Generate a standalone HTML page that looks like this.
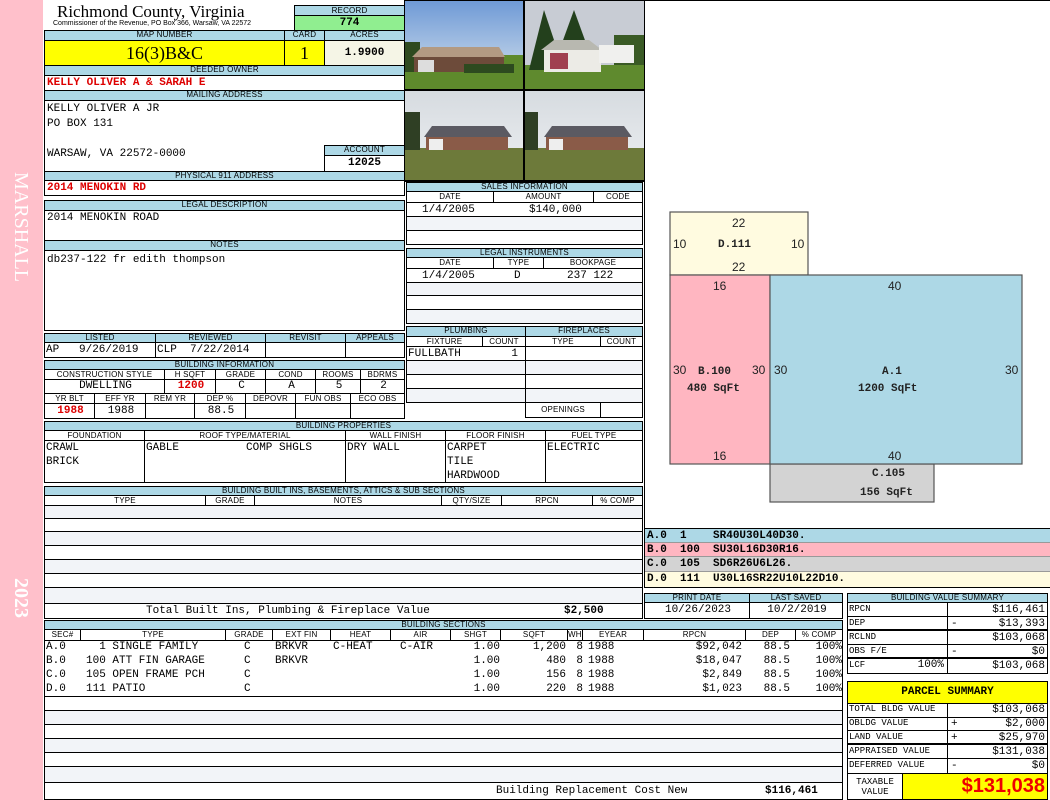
<!DOCTYPE html>
<html><head><meta charset="utf-8"><style>
*{margin:0;padding:0;box-sizing:border-box}
body{width:1050px;height:800px;background:#fff;position:relative;overflow:hidden;font-family:"Liberation Mono",monospace;font-size:11px;color:#000}
div,span{position:absolute;white-space:nowrap;overflow:hidden}
.b{border:1px solid #000}
.h{background:#add8e6;border:1px solid #000;font:8px/8px "Liberation Sans",sans-serif;text-align:center;text-transform:uppercase;letter-spacing:.2px}
.s{background:#fff;border:1px solid #000;font:8px/9px "Liberation Sans",sans-serif;text-align:center;letter-spacing:.2px}
.v{font:11px/14px "Liberation Mono",monospace;padding-left:2px}
.r{text-align:right;padding-right:3px}
.c{text-align:center}
.red{color:#d00;font-weight:bold}
.ln{border-bottom:1px solid #000}
.st{background:#f2f4f8}
.bv{font:9px/13px "Liberation Mono",monospace;padding-left:1px}
.row{height:14px;font:11px/14px "Liberation Mono",monospace}
.row span{top:0}
</style></head><body>
<div style="left:0;top:0;width:43px;height:800px;background:#ffc0cb"></div>
<div style="left:8px;top:172px;width:30px;height:140px;"><div style="left:0;top:0;width:140px;height:30px;transform-origin:0 0;transform:translate(28px,0) rotate(90deg);font:20px/30px 'Liberation Serif',serif;color:#fff">MARSHALL</div></div>
<div style="left:8px;top:578px;width:30px;height:60px;"><div style="left:0;top:0;width:60px;height:30px;transform-origin:0 0;transform:translate(28px,0) rotate(90deg);font:bold 20px/30px 'Liberation Serif',serif;color:#fff">2023</div></div>

<div style="left:57px;top:2px;width:240px;height:20px;font:17px/20px 'Liberation Serif',serif">Richmond County, Virginia</div>
<div style="left:53px;top:19px;width:240px;height:10px;font:7px/10px 'Liberation Sans',sans-serif">Commissioner of the Revenue, PO Box 366, Warsaw, VA 22572</div>
<div class="h" style="left:294px;top:5px;width:111px;height:11px;line-height:9px">RECORD</div>
<div class="b" style="left:294px;top:15px;width:111px;height:16px;background:#90ee90;font:bold 11px/14px 'Liberation Mono',monospace;text-align:center">774</div>
<div class="h" style="left:44px;top:30px;width:241px;height:11px">Map Number</div>
<div class="h" style="left:284px;top:30px;width:41px;height:11px">Card</div>
<div class="h" style="left:324px;top:30px;width:81px;height:11px">Acres</div>
<div class="b" style="left:44px;top:40px;width:241px;height:26px;background:#ffff00;font:18px/24px 'Liberation Serif',serif;text-align:center">16(3)B&amp;C</div>
<div class="b" style="left:284px;top:40px;width:41px;height:26px;background:#ffff00;font:18px/24px 'Liberation Serif',serif;text-align:center">1</div>
<div class="b" style="left:324px;top:40px;width:81px;height:26px;background:#f5f5e6;font:bold 11px/24px 'Liberation Mono',monospace;text-align:center">1.9900</div>
<div class="h" style="left:44px;top:65px;width:361px;height:11px">Deeded Owner</div>
<div class="b v red" style="left:44px;top:75px;width:361px;height:16px;line-height:14px">KELLY OLIVER A &amp; SARAH E</div>
<div class="h" style="left:44px;top:90px;width:361px;height:11px">Mailing Address</div>
<div class="b" style="left:44px;top:100px;width:361px;height:72px"></div>
<div class="v" style="left:45px;top:102px;width:270px;height:60px;line-height:15px;white-space:pre">KELLY OLIVER A JR
PO BOX 131

WARSAW, VA 22572-0000</div>
<div class="h" style="left:324px;top:145px;width:81px;height:11px">Account</div>
<div class="b" style="left:324px;top:155px;width:81px;height:17px;font:bold 11px/15px 'Liberation Mono',monospace;text-align:center">12025</div>
<div class="h" style="left:44px;top:171px;width:361px;height:10px;line-height:8px">Physical 911 Address</div>
<div class="b v red" style="left:44px;top:180px;width:361px;height:16px;line-height:14px">2014 MENOKIN RD</div>
<div class="h" style="left:44px;top:200px;width:361px;height:11px">Legal Description</div>
<div class="b v" style="left:44px;top:210px;width:361px;height:31px">2014 MENOKIN ROAD</div>
<div class="h" style="left:44px;top:240px;width:361px;height:11px">Notes</div>
<div class="b v" style="left:44px;top:250px;width:361px;height:81px;line-height:18px">db237-122 fr edith thompson</div>

<div class="h" style="left:44px;top:333px;width:112px;height:10px">Listed</div>
<div class="h" style="left:155px;top:333px;width:111px;height:10px">Reviewed</div>
<div class="h" style="left:265px;top:333px;width:81px;height:10px">Revisit</div>
<div class="h" style="left:345px;top:333px;width:60px;height:10px">Appeals</div>
<div class="b v" style="left:44px;top:342px;width:112px;height:16px;padding-left:1px">AP &nbsp;&nbsp;9/26/2019</div>
<div class="b v" style="left:155px;top:342px;width:111px;height:16px;padding-left:1px">CLP &nbsp;7/22/2014</div>
<div class="b" style="left:265px;top:342px;width:81px;height:16px"></div>
<div class="b" style="left:345px;top:342px;width:60px;height:16px"></div>
<div class="h" style="left:44px;top:360px;width:361px;height:10px">Building Information</div>
<div class="s" style="left:44px;top:369px;width:121px;height:11px">CONSTRUCTION STYLE</div>
<div class="s" style="left:164px;top:369px;width:52px;height:11px">H SQFT</div>
<div class="s" style="left:215px;top:369px;width:51px;height:11px">GRADE</div>
<div class="s" style="left:265px;top:369px;width:51px;height:11px">COND</div>
<div class="s" style="left:315px;top:369px;width:46px;height:11px">ROOMS</div>
<div class="s" style="left:360px;top:369px;width:45px;height:11px">BDRMS</div>
<div class="b v c" style="left:44px;top:379px;width:121px;height:15px;line-height:13px">DWELLING</div>
<div class="b v c red" style="left:164px;top:379px;width:52px;height:15px;line-height:13px">1200</div>
<div class="b v c" style="left:215px;top:379px;width:51px;height:15px;line-height:13px">C</div>
<div class="b v c" style="left:265px;top:379px;width:51px;height:15px;line-height:13px">A</div>
<div class="b v c" style="left:315px;top:379px;width:46px;height:15px;line-height:13px">5</div>
<div class="b v c" style="left:360px;top:379px;width:45px;height:15px;line-height:13px">2</div>
<div class="s" style="left:44px;top:393px;width:51px;height:11px">YR BLT</div>
<div class="s" style="left:94px;top:393px;width:52px;height:11px">EFF YR</div>
<div class="s" style="left:145px;top:393px;width:50px;height:11px">REM YR</div>
<div class="s" style="left:194px;top:393px;width:52px;height:11px">DEP %</div>
<div class="s" style="left:245px;top:393px;width:51px;height:11px">DEPOVR</div>
<div class="s" style="left:295px;top:393px;width:56px;height:11px">FUN OBS</div>
<div class="s" style="left:350px;top:393px;width:55px;height:11px">ECO OBS</div>
<div class="b v c red" style="left:44px;top:403px;width:51px;height:16px">1988</div>
<div class="b v c" style="left:94px;top:403px;width:52px;height:16px">1988</div>
<div class="b" style="left:145px;top:403px;width:50px;height:16px"></div>
<div class="b v c" style="left:194px;top:403px;width:52px;height:16px">88.5</div>
<div class="b" style="left:245px;top:403px;width:51px;height:16px"></div>
<div class="b" style="left:295px;top:403px;width:56px;height:16px"></div>
<div class="b" style="left:350px;top:403px;width:55px;height:16px"></div>

<div style="left:404px;top:0;width:241px;height:182px;background:#000">
<svg width="241" height="182" viewBox="0 0 241 182" style="position:absolute;left:0;top:0">
<defs><linearGradient id="sk" x1="0" y1="0" x2="0" y2="1"><stop offset="0" stop-color="#6f9ad6"/><stop offset="1" stop-color="#d8e4ee"/></linearGradient>
<linearGradient id="sk2" x1="0" y1="0" x2="0" y2="1"><stop offset="0" stop-color="#d6dbe0"/><stop offset="1" stop-color="#eef0f2"/></linearGradient></defs>
<rect x="1" y="1" width="118" height="88" fill="url(#sk)"/>
<rect x="1" y="55" width="118" height="34" fill="#5e8a2c"/>
<rect x="1" y="42" width="15" height="30" fill="#2f4a1f"/>
<polygon points="8,57 18,47 95,47 101,57" fill="#b39a82"/>
<rect x="10" y="57" width="90" height="15" fill="#6d4b3a"/>
<rect x="14" y="60" width="16" height="12" fill="#ddd"/>
<rect x="60" y="64" width="50" height="9" fill="#2d4a1f"/>
<rect x="121" y="1" width="119" height="88" fill="#c8ccd4"/>
<rect x="121" y="65" width="119" height="24" fill="#5f8a2e"/>
<polygon points="125,70 140,10 160,70" fill="#23401c"/>
<polygon points="150,65 170,10 190,65" fill="#23401c"/>
<rect x="210" y="35" width="30" height="30" fill="#3a5a25"/>
<rect x="140" y="48" width="57" height="24" fill="#ecebe6"/>
<polygon points="137,50 150,40 185,40 198,50" fill="#b8b8b0"/>
<rect x="146" y="53" width="18" height="16" fill="#a04050"/>
<rect x="195" y="45" width="35" height="18" fill="#f0f0ee"/>
<rect x="1" y="91" width="118" height="89" fill="url(#sk2)"/>
<rect x="1" y="148" width="118" height="32" fill="#6d7a3a"/>
<rect x="1" y="112" width="15" height="38" fill="#2f3f24"/>
<polygon points="20,137 28,126 100,126 108,137" fill="#5b5a62"/>
<rect x="22" y="137" width="82" height="13" fill="#8a5b48"/>
<rect x="25" y="139" width="14" height="11" fill="#eee"/>
<rect x="121" y="91" width="119" height="89" fill="url(#sk2)"/>
<rect x="121" y="148" width="119" height="32" fill="#6d7a3a"/>
<rect x="121" y="112" width="13" height="38" fill="#2f3f24"/>
<polygon points="140,137 148,126 220,126 228,137" fill="#5b5a62"/>
<rect x="142" y="137" width="82" height="13" fill="#8a5b48"/>
<rect x="145" y="139" width="14" height="11" fill="#eee"/>
</svg></div>

<!-- sales -->
<div class="st ln" style="left:406px;top:216px;width:237px;height:15px"></div>
<div class="b" style="left:406px;top:182px;width:237px;height:63px"></div>
<div class="ln" style="left:406px;top:202px;width:237px;height:15px"></div>
<div class="h" style="left:406px;top:182px;width:237px;height:10px">Sales Information</div>
<div class="s" style="left:406px;top:191px;width:88px;height:12px">DATE</div>
<div class="s" style="left:493px;top:191px;width:101px;height:12px">AMOUNT</div>
<div class="s" style="left:593px;top:191px;width:50px;height:12px">CODE</div>
<div class="v" style="left:420px;top:203px;width:80px;height:14px">1/4/2005</div>
<div class="v" style="left:527px;top:203px;width:80px;height:14px">$140,000</div>
<!-- legal instruments -->
<div class="st ln" style="left:406px;top:282px;width:237px;height:14px"></div>
<div class="st" style="left:406px;top:309px;width:237px;height:14px"></div>
<div class="b" style="left:406px;top:248px;width:237px;height:76px"></div>
<div class="ln" style="left:406px;top:268px;width:237px;height:15px"></div>
<div class="ln" style="left:406px;top:295px;width:237px;height:15px"></div>
<div class="h" style="left:406px;top:248px;width:237px;height:10px">Legal Instruments</div>
<div class="s" style="left:406px;top:257px;width:88px;height:12px">DATE</div>
<div class="s" style="left:493px;top:257px;width:51px;height:12px">TYPE</div>
<div class="s" style="left:543px;top:257px;width:100px;height:12px">BOOKPAGE</div>
<div class="v" style="left:420px;top:269px;width:80px;height:14px">1/4/2005</div>
<div class="v" style="left:512px;top:269px;width:20px;height:14px">D</div>
<div class="v" style="left:565px;top:269px;width:70px;height:14px">237 122</div>
<!-- plumbing -->
<div class="st" style="left:406px;top:360px;width:237px;height:15px"></div>
<div class="st" style="left:406px;top:388px;width:237px;height:15px"></div>
<div class="ln" style="left:406px;top:346px;width:237px;height:15px"></div>
<div class="ln" style="left:406px;top:360px;width:237px;height:15px"></div>
<div class="ln" style="left:406px;top:374px;width:237px;height:15px"></div>
<div class="ln" style="left:406px;top:388px;width:237px;height:15px"></div>
<div class="b" style="left:406px;top:346px;width:120px;height:57px"></div>
<div class="b" style="left:525px;top:346px;width:118px;height:72px"></div>
<div class="h" style="left:406px;top:326px;width:120px;height:11px">Plumbing</div>
<div class="h" style="left:525px;top:326px;width:118px;height:11px">Fireplaces</div>
<div class="s" style="left:406px;top:336px;width:77px;height:11px">FIXTURE</div>
<div class="s" style="left:482px;top:336px;width:44px;height:11px">COUNT</div>
<div class="s" style="left:525px;top:336px;width:76px;height:11px">TYPE</div>
<div class="s" style="left:600px;top:336px;width:43px;height:11px">COUNT</div>
<div class="v" style="left:407px;top:347px;width:116px;height:14px;padding-left:1px">FULLBATH<span style="right:5px;top:0">1</span></div>
<div class="s" style="left:525px;top:402px;width:76px;height:16px;line-height:14px">OPENINGS</div>
<div class="b" style="left:600px;top:402px;width:43px;height:16px"></div>

<!-- building properties -->
<div class="h" style="left:44px;top:421px;width:599px;height:10px">Building Properties</div>
<div class="s" style="left:44px;top:430px;width:101px;height:11px">FOUNDATION</div>
<div class="s" style="left:144px;top:430px;width:202px;height:11px">ROOF TYPE/MATERIAL</div>
<div class="s" style="left:345px;top:430px;width:101px;height:11px">WALL FINISH</div>
<div class="s" style="left:445px;top:430px;width:101px;height:11px">FLOOR FINISH</div>
<div class="s" style="left:545px;top:430px;width:98px;height:11px">FUEL TYPE</div>
<div class="b v" style="left:44px;top:440px;width:101px;height:43px;padding-left:1px">CRAWL<br>BRICK</div>
<div class="b v" style="left:144px;top:440px;width:202px;height:43px;padding-left:1px">GABLE<span style="left:101px;top:0">COMP SHGLS</span></div>
<div class="b v" style="left:345px;top:440px;width:101px;height:43px;padding-left:1px">DRY WALL</div>
<div class="b v" style="left:445px;top:440px;width:101px;height:43px;padding-left:1px">CARPET<br>TILE<br>HARDWOOD</div>
<div class="b v" style="left:545px;top:440px;width:98px;height:43px;padding-left:1px">ELECTRIC</div>

<!-- built ins -->
<div class="h" style="left:44px;top:486px;width:599px;height:10px">Building Built Ins, Basements, Attics &amp; Sub Sections</div>
<div class="s" style="left:44px;top:495px;width:162px;height:11px">TYPE</div>
<div class="s" style="left:205px;top:495px;width:50px;height:11px">GRADE</div>
<div class="s" style="left:254px;top:495px;width:188px;height:11px">NOTES</div>
<div class="s" style="left:441px;top:495px;width:61px;height:11px">QTY/SIZE</div>
<div class="s" style="left:501px;top:495px;width:92px;height:11px">RPCN</div>
<div class="s" style="left:592px;top:495px;width:51px;height:11px">% COMP</div>
<div class="st" style="left:44px;top:505px;width:599px;height:14px"></div>
<div class="st" style="left:44px;top:531px;width:599px;height:15px"></div>
<div class="st" style="left:44px;top:559px;width:599px;height:15px"></div>
<div class="st" style="left:44px;top:587px;width:599px;height:16px"></div>
<div class="ln" style="left:44px;top:505px;width:599px;height:14px"></div>
<div class="ln" style="left:44px;top:518px;width:599px;height:14px"></div>
<div class="ln" style="left:44px;top:531px;width:599px;height:15px"></div>
<div class="ln" style="left:44px;top:545px;width:599px;height:15px"></div>
<div class="ln" style="left:44px;top:559px;width:599px;height:15px"></div>
<div class="ln" style="left:44px;top:573px;width:599px;height:15px"></div>
<div class="b" style="left:44px;top:505px;width:599px;height:99px"></div>
<div class="b v" style="left:44px;top:603px;width:599px;height:16px;line-height:15px"><span style="left:101px;top:0">Total Built Ins, Plumbing &amp; Fireplace Value</span><span style="left:519px;top:0;font-weight:bold">$2,500</span></div>

<!-- building sections -->
<div class="h" style="left:44px;top:620px;width:799px;height:10px">Building Sections</div>
<div class="s" style="left:44px;top:629px;width:37px;height:12px">SEC#</div>
<div class="s" style="left:80px;top:629px;width:146px;height:12px">TYPE</div>
<div class="s" style="left:225px;top:629px;width:48px;height:12px">GRADE</div>
<div class="s" style="left:272px;top:629px;width:59px;height:12px">EXT FIN</div>
<div class="s" style="left:330px;top:629px;width:61px;height:12px">HEAT</div>
<div class="s" style="left:390px;top:629px;width:61px;height:12px">AIR</div>
<div class="s" style="left:450px;top:629px;width:51px;height:12px">SHGT</div>
<div class="s" style="left:500px;top:629px;width:68px;height:12px">SQFT</div>
<div class="s" style="left:567px;top:629px;width:16px;height:12px">WHGT</div>
<div class="s" style="left:582px;top:629px;width:62px;height:12px">EYEAR</div>
<div class="s" style="left:643px;top:629px;width:103px;height:12px">RPCN</div>
<div class="s" style="left:745px;top:629px;width:51px;height:12px">DEP</div>
<div class="s" style="left:795px;top:629px;width:48px;height:12px">% COMP</div>
<div class="st" style="left:44px;top:710px;width:799px;height:15px"></div>
<div class="st" style="left:44px;top:738px;width:799px;height:15px"></div>
<div class="st" style="left:44px;top:766px;width:799px;height:17px"></div>
<div class="ln" style="left:44px;top:640px;width:799px;height:57px"></div>
<div class="ln" style="left:44px;top:696px;width:799px;height:15px"></div>
<div class="ln" style="left:44px;top:710px;width:799px;height:15px"></div>
<div class="ln" style="left:44px;top:724px;width:799px;height:15px"></div>
<div class="ln" style="left:44px;top:738px;width:799px;height:15px"></div>
<div class="ln" style="left:44px;top:752px;width:799px;height:15px"></div>
<div class="b" style="left:44px;top:640px;width:799px;height:143px"></div>

<div class="row" style="left:0;top:640px;width:1050px">
<span style="left:46px">A.0</span><span style="left:86px">&nbsp;&nbsp;1 SINGLE FAMILY</span><span style="left:244px">C</span><span style="left:275px">BRKVR</span><span style="left:333px">C-HEAT</span><span style="left:400px">C-AIR</span><span style="right:550px">1.00</span><span style="right:484px">1,200</span><span style="right:467px">8</span><span style="left:588px">1988</span><span style="right:308px">$92,042</span><span style="right:260px">88.5</span><span style="right:208px">100%</span></div>
<div class="row" style="left:0;top:654px;width:1050px">
<span style="left:46px">B.0</span><span style="left:86px">100 ATT FIN GARAGE</span><span style="left:244px">C</span><span style="left:275px">BRKVR</span><span style="right:550px">1.00</span><span style="right:484px">480</span><span style="right:467px">8</span><span style="left:588px">1988</span><span style="right:308px">$18,047</span><span style="right:260px">88.5</span><span style="right:208px">100%</span></div>
<div class="row" style="left:0;top:668px;width:1050px">
<span style="left:46px">C.0</span><span style="left:86px">105 OPEN FRAME PCH</span><span style="left:244px">C</span><span style="right:550px">1.00</span><span style="right:484px">156</span><span style="right:467px">8</span><span style="left:588px">1988</span><span style="right:308px">$2,849</span><span style="right:260px">88.5</span><span style="right:208px">100%</span></div>
<div class="row" style="left:0;top:682px;width:1050px">
<span style="left:46px">D.0</span><span style="left:86px">111 PATIO</span><span style="left:244px">C</span><span style="right:550px">1.00</span><span style="right:484px">220</span><span style="right:467px">8</span><span style="left:588px">1988</span><span style="right:308px">$1,023</span><span style="right:260px">88.5</span><span style="right:208px">100%</span></div>
<div class="b v" style="left:44px;top:782px;width:799px;height:18px;line-height:17px"><span style="left:451px;top:0">Building Replacement Cost New</span><span style="left:720px;top:0;font-weight:bold">$116,461</span></div>

<!-- right panel -->
<div class="b" style="left:644px;top:0;width:406px;height:529px;border-right:none"></div>
<svg width="406" height="320" style="position:absolute;left:644px;top:200px" viewBox="644 200 406 320">
<g stroke="#555" stroke-width="1.2">
<rect x="670" y="212" width="138" height="63" fill="#fffbe0"/>
<rect x="770" y="464" width="164" height="38" fill="#d3d3d3"/>
<rect x="670" y="275" width="100" height="189" fill="#ffb6c1"/>
<rect x="770" y="275" width="252" height="189" fill="#add8e6"/>
</g>
<g font-family="Liberation Sans, sans-serif" font-size="12" fill="#222">
<text x="732" y="227">22</text><text x="673" y="248">10</text><text x="791" y="248">10</text><text x="732" y="271">22</text>
<text x="713" y="290">16</text><text x="888" y="290">40</text>
<text x="673" y="374">30</text><text x="752" y="374">30</text><text x="774" y="374">30</text><text x="1005" y="374">30</text>
<text x="713" y="460">16</text><text x="888" y="460">40</text>
</g>
<g font-family="Liberation Mono, monospace" font-size="11" font-weight="bold" fill="#222">
<text x="718" y="247">D.111</text>
<text x="698" y="374">B.100</text><text x="687" y="391">480 SqFt</text>
<text x="882" y="374">A.1</text><text x="858" y="391">1200 SqFt</text>
<text x="872" y="476">C.105</text><text x="860" y="495">156 SqFt</text>
</g></svg>
<div style="left:644px;top:528px;width:406px;height:60px;border:1px solid #000;border-right:none"></div>
<div class="v" style="left:645px;top:529px;width:405px;height:14px;background:#add8e6;font-weight:bold;line-height:14px;border-bottom:1px solid #999">A.0 &nbsp;1 &nbsp;&nbsp;&nbsp;SR40U30L40D30.</div>
<div class="v" style="left:645px;top:543px;width:405px;height:14px;background:#ffb6c1;font-weight:bold;line-height:14px;border-bottom:1px solid #999">B.0 &nbsp;100 &nbsp;SU30L16D30R16.</div>
<div class="v" style="left:645px;top:557px;width:405px;height:15px;background:#d3d3d3;font-weight:bold;line-height:14px;border-bottom:1px solid #999">C.0 &nbsp;105 &nbsp;SD6R26U6L26.</div>
<div class="v" style="left:645px;top:572px;width:405px;height:15px;background:#fffbe0;font-weight:bold;line-height:14px">D.0 &nbsp;111 &nbsp;U30L16SR22U10L22D10.</div>

<div class="h" style="left:644px;top:593px;width:106px;height:10px">Print Date</div>
<div class="h" style="left:749px;top:593px;width:94px;height:10px">Last Saved</div>
<div class="b v c" style="left:644px;top:602px;width:106px;height:17px;line-height:15px">10/26/2023</div>
<div class="b v c" style="left:749px;top:602px;width:94px;height:17px;line-height:15px">10/2/2019</div>

<div class="h" style="left:847px;top:593px;width:201px;height:10px">Building Value Summary</div>
<div class="ln" style="left:847px;top:602px;width:201px;height:15px"></div>
<div class="ln" style="left:847px;top:616px;width:201px;height:15px;border-bottom:2px solid #000"></div>
<div class="ln" style="left:847px;top:631px;width:201px;height:14px"></div>
<div class="ln" style="left:847px;top:644px;width:201px;height:15px;border-bottom:2px solid #000"></div>
<div class="b" style="left:847px;top:602px;width:201px;height:72px"></div>
<div style="left:947px;top:602px;width:1px;height:72px;background:#000"></div>
<div class="bv" style="left:848px;top:603px;width:98px;height:14px">RPCN</div>
<div class="bv" style="left:848px;top:617px;width:98px;height:14px">DEP</div>
<div class="bv" style="left:848px;top:631px;width:98px;height:14px">RCLND</div>
<div class="bv" style="left:848px;top:645px;width:98px;height:14px">OBS F/E</div>
<div class="bv" style="left:848px;top:659px;width:98px;height:14px">LCF<span style="right:2px;top:0;font-size:11px">100%</span></div>
<div class="v r" style="left:948px;top:603px;width:100px;height:14px">$116,461</div>
<div class="v r" style="left:948px;top:617px;width:100px;height:14px"><span style="left:3px;top:0">-</span>$13,393</div>
<div class="v r" style="left:948px;top:631px;width:100px;height:14px">$103,068</div>
<div class="v r" style="left:948px;top:645px;width:100px;height:14px"><span style="left:3px;top:0">-</span>$0</div>
<div class="v r" style="left:948px;top:659px;width:100px;height:14px">$103,068</div>

<div class="b" style="left:847px;top:681px;width:201px;height:23px;background:#ffff00;font:bold 11px/21px 'Liberation Mono',monospace;text-align:center">PARCEL SUMMARY</div>
<div class="ln" style="left:847px;top:703px;width:201px;height:15px"></div>
<div class="ln" style="left:847px;top:717px;width:201px;height:14px"></div>
<div class="ln" style="left:847px;top:730px;width:201px;height:15px;border-bottom:2px solid #000"></div>
<div class="ln" style="left:847px;top:745px;width:201px;height:14px"></div>
<div class="b" style="left:847px;top:703px;width:201px;height:71px"></div>
<div style="left:947px;top:703px;width:1px;height:71px;background:#000"></div>
<div class="bv" style="left:848px;top:703px;width:98px;height:14px">TOTAL BLDG VALUE</div>
<div class="bv" style="left:848px;top:717px;width:98px;height:14px">OBLDG VALUE</div>
<div class="bv" style="left:848px;top:731px;width:98px;height:14px">LAND VALUE</div>
<div class="bv" style="left:848px;top:745px;width:98px;height:14px">APPRAISED VALUE</div>
<div class="bv" style="left:848px;top:759px;width:98px;height:14px">DEFERRED VALUE</div>
<div class="v r" style="left:948px;top:703px;width:100px;height:14px">$103,068</div>
<div class="v r" style="left:948px;top:717px;width:100px;height:14px"><span style="left:3px;top:0">+</span>$2,000</div>
<div class="v r" style="left:948px;top:731px;width:100px;height:14px"><span style="left:3px;top:0">+</span>$25,970</div>
<div class="v r" style="left:948px;top:745px;width:100px;height:14px">$131,038</div>
<div class="v r" style="left:948px;top:759px;width:100px;height:14px"><span style="left:3px;top:0">-</span>$0</div>
<div class="b" style="left:847px;top:773px;width:56px;height:27px;font:9px/10px 'Liberation Mono',monospace;text-align:center;padding-top:3px">TAXABLE<br>VALUE</div>
<div class="b" style="left:902px;top:773px;width:146px;height:27px;background:#ffff00;color:#e00;font:bold 20px/25px 'Liberation Sans',sans-serif;text-align:right;padding-right:2px">$131,038</div>
</body></html>
